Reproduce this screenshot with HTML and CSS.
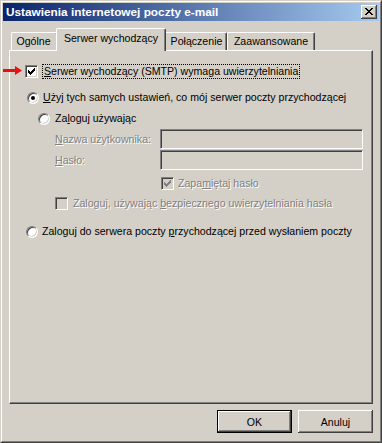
FILE: index.html
```html
<!DOCTYPE html>
<html lang="pl">
<head>
    <meta charset="UTF-8">
    <title>Ustawienia internetowej poczty e-mail</title>
    <link rel="stylesheet" href="styles.css">
</head>
<body>
<div class="window">
  <div class="frame">
    <!-- pasek tytułu -->
    <div class="titlebar">
      <span class="title">Ustawienia internetowej poczty e-mail</span>
      <span class="close">
        <svg width="8" height="7" viewBox="0 0 8 7"><path d="M0 0h2v1h-2zM6 0h2v1h-2zM1 1h2v1h-2zM5 1h2v1h-2zM2 2h4v1h-4zM3 3h2v1h-2zM2 4h4v1h-4zM1 5h2v1h-2zM5 5h2v1h-2zM0 6h2v1h-2zM6 6h2v1h-2z" fill="#000"/></svg>
      </span>
    </div>

    <div class="content">
      <!-- zakładki -->
      <div class="tabs">
        <div class="tab tab-general">Ogólne</div>
        <div class="tab tab-smtp active">Serwer wychodzący</div>
        <div class="tab tab-conn">Połączenie</div>
        <div class="tab tab-adv">Zaawansowane</div>
      </div>

      <div class="panel">
        <div class="row row-auth">
          <span class="check">
            <svg width="9" height="9" viewBox="0 0 9 9"><path d="M1 3v3h1v1h1v1h1v-1h1v-1h1v-1h1v-1h1v-3h-1v1h-1v1h-1v1h-1v1h-1v-1h-1v-1h-1z" fill="#000"/></svg>
          </span>
          <span class="label focus"><u>S</u>erwer wychodzący (SMTP) wymaga uwierzytelniania</span>
        </div>

        <div class="row row-same">
          <span class="radio on"></span>
          <span class="label"><u>U</u>żyj tych samych ustawień, co mój serwer poczty przychodzącej</span>
        </div>

        <div class="row row-login">
          <span class="radio"></span>
          <span class="label">Za<u>l</u>oguj używając</span>
        </div>

        <div class="row row-field row-user">
          <span class="label disabled field-label"><u>N</u>azwa użytkownika:</span>
          <span class="edit"></span>
        </div>
        <div class="row row-field row-pass">
          <span class="label disabled field-label"><u>H</u>asło:</span>
          <span class="edit"></span>
        </div>

        <div class="row row-remember">
          <span class="check off">
            <svg width="9" height="9" viewBox="0 0 9 9"><path d="M1 3v3h1v1h1v1h1v-1h1v-1h1v-1h1v-1h1v-3h-1v1h-1v1h-1v1h-1v1h-1v-1h-1v-1h-1z" fill="#808080"/></svg>
          </span>
          <span class="label disabled">Zapa<u>m</u>iętaj hasło</span>
        </div>

        <div class="row row-spa">
          <span class="check off"></span>
          <span class="label disabled">Zaloguj, używając <u>b</u>ezpiecznego uwierzytelniania hasła</span>
        </div>

        <div class="row row-pop">
          <span class="radio"></span>
          <span class="label">Zaloguj do serwera poczty <u>p</u>rzychodzącej przed wysłaniem poczty</span>
        </div>
      </div>

      <div class="buttons">
        <button class="btn default">OK</button>
        <button class="btn">Anuluj</button>
      </div>
    </div>
  </div>

  <!-- czerwona strzałka -->
  <svg class="arrow" width="20" height="9" viewBox="0 0 20 9"><polygon points="0,3 12,3 12,0 19,4.5 12,9 12,6 0,6" fill="#e81010"/></svg>
</div>
</body>
</html>
```

FILE: styles.css
```css
body {
    margin: 0;
    padding: 0;
    background: #d4d0c8;
    font-family: "Liberation Sans", Arial, sans-serif;
    font-size: 10.6px;
    color: #000;
}

/* ramka okna */
.window {
    position: relative;
    width: 382px;
    height: 443px;
    box-sizing: border-box;
    border: 1px solid;
    border-color: #d4d0c8 #404040 #404040 #d4d0c8;
    background: #d4d0c8;
}

.frame {
    height: 100%;
    box-sizing: border-box;
    border: 1px solid;
    border-color: #fff #808080 #808080 #fff;
    padding: 1px;
    display: flex;
    flex-direction: column;
}

.titlebar {
    height: 18px;
    flex: none;
    display: flex;
    align-items: center;
    justify-content: space-between;
    padding: 0 2px 0 3px;
    background: linear-gradient(to right, #0a246a, #a6caf0);
}

.title {
    color: #fff;
    font-weight: bold;
    font-size: 11.8px;
}

.close {
    width: 16px;
    height: 14px;
    box-sizing: border-box;
    display: flex;
    align-items: center;
    justify-content: center;
    padding: 0 1px 1px 0;
    background: #d4d0c8;
    box-shadow: inset -1px -1px #404040, inset 1px 1px #fff, inset -2px -2px #808080, inset 2px 2px #d4d0c8;
}

.close svg { display: block; }

.content {
    flex: 1;
    display: flex;
    flex-direction: column;
    padding: 7px 6px 7px 6px;
}

/* zakładki */
.tabs {
    height: 22px;
    flex: none;
    display: flex;
    align-items: flex-end;
    padding-left: 2px;
}

.tab {
    height: 18px;
    box-sizing: border-box;
    border-top: 1px solid #fff;
    border-left: 1px solid #fff;
    border-right: 1px solid #404040;
    border-radius: 2px 2px 0 0;
    box-shadow: inset -1px 0 #808080;
    line-height: 16px;
    text-align: center;
    white-space: nowrap;
}

.tab-general { width: 47px; padding-right: 2px; }
.tab-smtp { width: 106px; }
.tab-conn { width: 63px; padding-left: 2px; }
.tab-adv { width: 88px; }

.tab.active {
    position: relative;
    z-index: 1;
    width: 110px;
    height: 23px;
    margin: 0 -2px -1px -2px;
    line-height: 19px;
    background: #d4d0c8;
}

.panel {
    flex: 1;
    box-sizing: border-box;
    border: 1px solid;
    border-color: #fff #404040 #404040 #fff;
    box-shadow: inset -1px -1px #808080;
    display: flex;
    flex-direction: column;
}

/* wiersze */
.row {
    display: flex;
    align-items: center;
    height: 13px;
    white-space: nowrap;
}

.row-auth { height: 15px; margin-top: 13px; padding-left: 15px; gap: 4px; }
.row-same { margin-top: 12px; padding-left: 17px; gap: 4px; }
.row-login { margin-top: 8px; padding-left: 28px; gap: 5px; }
.row-field { height: 20px; padding-left: 45px; }
.row-user { margin-top: 4px; }
.row-pass { margin-top: 1px; }
.row-remember { margin-top: 7px; padding-left: 151px; gap: 4px; }
.row-spa { margin-top: 7px; padding-left: 45px; gap: 5px; }
.row-pop { margin-top: 15px; padding-left: 16px; gap: 4px; }

.label { line-height: 13px; }

.label.focus {
    border: 1px dotted #000;
    padding: 0 1px;
}

.label.disabled {
    color: #808080;
    text-shadow: 1px 1px 0 #fff;
}

.field-label { width: 105px; }

.edit {
    width: 203px;
    height: 20px;
    box-sizing: border-box;
    border: 1px solid;
    border-color: #808080 #fff #fff #808080;
    box-shadow: inset 1px 1px #404040, inset -1px -1px #d4d0c8;
    background: #d4d0c8;
}

/* pola wyboru */
.check {
    width: 13px;
    height: 13px;
    flex: none;
    box-sizing: border-box;
    border: 1px solid;
    border-color: #808080 #fff #fff #808080;
    box-shadow: inset 1px 1px #404040, inset -1px -1px #d4d0c8;
    background: #fff;
}

.check svg {
    display: block;
    margin: 1px;
}

.check.off { background: #d4d0c8; }

.radio {
    position: relative;
    width: 12px;
    height: 12px;
    flex: none;
    box-sizing: border-box;
    border-radius: 50%;
    border: 1px solid;
    border-color: #808080 #fff #fff #808080;
    box-shadow: inset 1px 1px #404040, inset -1px -1px #d4d0c8;
    background: #fff;
}

.radio.on::after {
    content: "";
    position: absolute;
    left: 3px;
    top: 3px;
    width: 4px;
    height: 4px;
    border-radius: 50%;
    background: #000;
}

/* przyciski */
.buttons {
    flex: none;
    display: flex;
    justify-content: flex-end;
    gap: 6px;
    margin-top: 6px;
}

.btn {
    width: 75px;
    height: 23px;
    margin: 0;
    padding: 0;
    border: none;
    background: #d4d0c8;
    font-family: "Liberation Sans", Arial, sans-serif;
    font-size: 10.6px;
    color: #000;
    box-shadow: inset -1px -1px #404040, inset 1px 1px #fff, inset -2px -2px #808080, inset 2px 2px #d4d0c8;
}

.btn.default {
    box-shadow: inset 0 0 0 1px #000, inset -2px -2px #404040, inset 2px 2px #fff, inset -3px -3px #808080, inset 3px 3px #d4d0c8;
}

.arrow {
    position: absolute;
    left: 2px;
    top: 65px;
}
```
